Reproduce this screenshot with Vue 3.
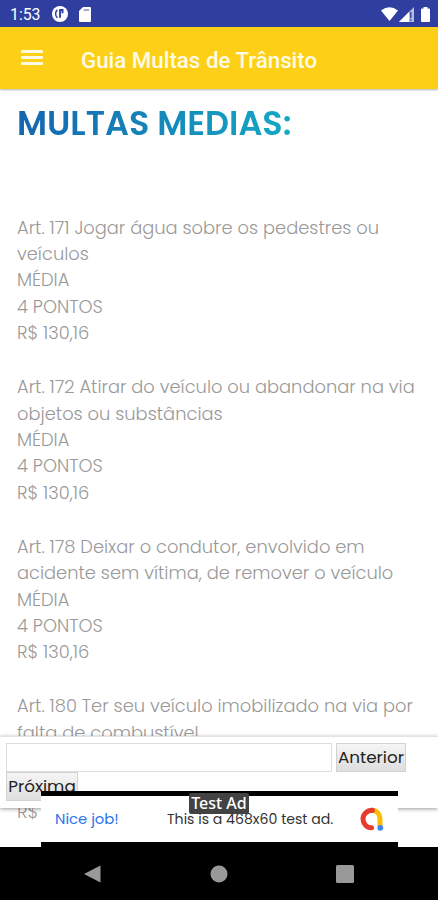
<template>
  <div class="screen">
    <header class="status-bar">
      <span class="clock">1:53</span>
      <svg class="status-app" viewBox="0 0 16 16">
        <circle cx="8" cy="8" r="8" fill="#fff" />
        <path d="M5.400 4C3 5.500 3 10 5.400 11.800" fill="none" stroke="#303f9f" stroke-width="1.500" />
        <path d="M8 3.200v8.500M8 4h2.500v3.200" fill="none" stroke="#303f9f" stroke-width="1.900" />
      </svg>
      <svg class="status-card" viewBox="0 0 12 15">
        <path d="M4 0h7a1 1 0 0 1 1 1v13a1 1 0 0 1-1 1H1a1 1 0 0 1-1-1V4z" fill="#fff" />
        <path d="M4.500 3h5.500" stroke="#303f9f" stroke-opacity=".6" stroke-width="1.500" />
      </svg>
      <div class="status-right">
        <svg class="wifi" viewBox="0 0 17 14">
          <path d="M0 3.500Q8.500-3 17 3.500L8.500 14z" fill="#fff" />
        </svg>
        <svg class="signal" viewBox="0 0 15 15">
          <path d="M15 0v15H0z" fill="#fff" fill-opacity=".65" />
          <path d="M10 5V15H0z" fill="#fff" />
          <path d="M11.800 5v6M11.800 12.300v1.500" stroke="#303f9f" stroke-width="1.400" />
        </svg>
        <svg class="battery" viewBox="0 0 9 15">
          <path d="M2.500 0h4v1.500H8a1 1 0 0 1 1 1V14a1 1 0 0 1-1 1H1a1 1 0 0 1-1-1V2.500a1 1 0 0 1 1-1h1.500z" fill="#fff" />
        </svg>
      </div>
    </header>

    <div class="toolbar">
      <button class="menu-btn" aria-label="Menu">
        <span></span>
        <span></span>
        <span></span>
      </button>
      <h1>Guia Multas de Trânsito</h1>
    </div>

    <main class="content">
      <h2><span>MULTAS MEDIAS:</span></h2>
      <article v-for="multa in multas" :key="multa.art" class="multa">
        <p v-for="linha in multa.linhas" :key="linha">{{ linha }}</p>
        <p>MÉDIA</p>
        <p>4 PONTOS</p>
        <p>R$ 130,16</p>
      </article>

      <!-- Barra de busca -->
      <form class="search-bar" @submit.prevent>
        <input v-model="busca" type="text" />
        <button type="button" class="btn-anterior">Anterior</button>
        <button type="button" class="btn-proxima">Próxima</button>
      </form>

      <!-- Banner -->
      <aside class="ad">
        <span class="ad-label">Test Ad</span>
        <span class="ad-nice">Nice job!</span>
        <span class="ad-text">This is a 468x60 test ad.</span>
        <svg class="ad-logo" viewBox="0 0 24 24" fill="none" stroke-linecap="round" stroke-width="5">
          <path d="M12 3.200a8 8.300 0 0 1 8 8.300v8" stroke="#fbbc04" />
          <path d="M12.500 3.200C6.500 3.200 3 7.500 3 12s3.500 8.800 8.500 8.800" stroke="#e53c2e" />
          <circle cx="20.300" cy="20.800" r="2.900" fill="#4285f4" />
        </svg>
      </aside>
    </main>

    <nav class="nav-bar">
      <svg viewBox="0 0 18 18"><path d="M16.500.500v17L0 9z" /></svg>
      <svg viewBox="0 0 18 18"><circle cx="9" cy="9" r="8.500" /></svg>
      <svg viewBox="0 0 18 18"><rect width="18" height="18" rx="1.500" /></svg>
    </nav>
  </div>
</template>

<script setup>
import { ref } from 'vue'

const busca = ref('')

const multas = [
  {
    art: 171,
    linhas: ['Art. 171 Jogar água sobre os pedestres ou', 'veículos']
  },
  {
    art: 172,
    linhas: ['Art. 172 Atirar do veículo ou abandonar na via', 'objetos ou substâncias']
  },
  {
    art: 178,
    linhas: ['Art. 178 Deixar o condutor, envolvido em', 'acidente sem vítima, de remover o veículo']
  },
  {
    art: 180,
    linhas: ['Art. 180 Ter seu veículo imobilizado na via por', 'falta de combustível']
  }
]
</script>

<style>
body {
  margin: 0;
}
</style>

<style scoped>
.screen {
  display: flex;
  flex-direction: column;
  width: 438px;
  height: 900px;
  overflow: hidden;
  background: #fff;
  font-family: Poppins, Inter, sans-serif;
}

.screen * {
  box-sizing: border-box;
}

/* ===== STATUS BAR ===== */
.status-bar {
  display: flex;
  align-items: center;
  flex-shrink: 0;
  height: 27px;
  padding: 2px 8px 0 10px;
  background: #303f9f;
  color: #fff;
}

.clock {
  width: 42px;
  font: 400 15.800px/24px Roboto, sans-serif;
}

.status-app {
  width: 16px;
  height: 16px;
  margin-top: -1px;
}

.status-card {
  width: 12px;
  height: 15px;
  margin-left: 11px;
}

.status-right {
  display: flex;
  align-items: center;
  margin: -1px 0 0 auto;
}

.wifi {
  width: 17px;
  height: 14px;
  margin-top: -1px;
}

.signal {
  width: 15px;
  height: 15px;
  margin-left: 1px;
}

.battery {
  width: 9px;
  height: 15px;
  margin-left: 7px;
}

/* ===== TOOLBAR ===== */
.toolbar {
  display: flex;
  align-items: center;
  flex-shrink: 0;
  height: 62px;
  padding-left: 21px;
  background: #fdd017;
  box-shadow: 0 1px 2px rgba(0, 0, 0, 0.3);
  z-index: 1;
}

.menu-btn {
  display: flex;
  flex-direction: column;
  gap: 3.500px;
  width: 22px;
  margin: 0 38px 1px 0;
  padding: 0;
  border: none;
  background: none;
}

.menu-btn span {
  height: 2.500px;
  border-radius: 1px;
  background: #fffbe0;
}

.toolbar h1 {
  margin: 4px 0 0;
  color: #fffbe6;
  font: 500 22.300px/28px Roboto, sans-serif;
}

/* ===== CONTENT ===== */
.content {
  position: relative;
  flex: 1;
  min-height: 0;
  padding: 13px 17px 0;
  overflow: hidden;
}

.content h2 {
  height: 112.600px;
  margin: 0;
  font-size: 33.450px;
  font-weight: 600;
  line-height: 44px;
  white-space: nowrap;
}

.content h2 span {
  background: linear-gradient(90deg, #1565b0, #14a9c4);
  background-clip: text;
  color: transparent;
}

.multa {
  margin-bottom: 27.900px;
  color: #999;
  font-size: 17.850px;
  font-weight: 300;
  line-height: 26.340px;
  white-space: nowrap;
}

.multa p {
  margin: 0;
}

/* ===== SEARCH BAR ===== */
.search-bar {
  position: absolute;
  left: 0;
  right: 0;
  bottom: 39px;
  display: flex;
  flex-wrap: wrap;
  align-content: flex-start;
  column-gap: 4px;
  height: 72px;
  padding: 6px 6px 0;
  border-top: 1px solid #e4e4e4;
  background: #fff;
  box-shadow: 0 1px 4px rgba(0, 0, 0, 0.4);
}

.search-bar input {
  width: 326px;
  height: 29px;
  border: 1px solid #ddd;
  outline: none;
}

.search-bar button {
  height: 29px;
  padding: 0;
  border: 1px solid #d2d2d2;
  background: linear-gradient(#f5f5f5, #dedede);
  color: #222;
  font: 400 16.800px/25px Poppins, Inter, sans-serif;
}

.btn-anterior {
  width: 70px;
}

.btn-proxima {
  width: 72px;
}

/* ===== BANNER ===== */
.ad {
  position: absolute;
  left: 41px;
  bottom: 0;
  display: flex;
  align-items: center;
  width: 357px;
  height: 56px;
  padding: 0 14px;
  border: solid #000;
  border-width: 5px 0;
  background: #fff;
  white-space: nowrap;
}

.ad-label {
  position: absolute;
  top: -3px;
  left: 148px;
  width: 60px;
  height: 21px;
  border-radius: 2px;
  background: #424242;
  color: #fff;
  font: 500 16px/21px "Noto Sans", sans-serif;
  text-align: center;
}

.ad-nice {
  width: 112px;
  color: #2a73ee;
  font-size: 14.800px;
}

.ad-text {
  color: #333;
  font-size: 14.100px;
}

.ad-logo {
  width: 24px;
  height: 24px;
  margin-left: auto;
}

/* ===== NAV BAR ===== */
.nav-bar {
  display: flex;
  align-items: center;
  justify-content: space-between;
  flex-shrink: 0;
  height: 53px;
  padding: 0 84px;
  background: #000;
}

.nav-bar svg {
  width: 18px;
  height: 18px;
  fill: #999;
}
</style>
